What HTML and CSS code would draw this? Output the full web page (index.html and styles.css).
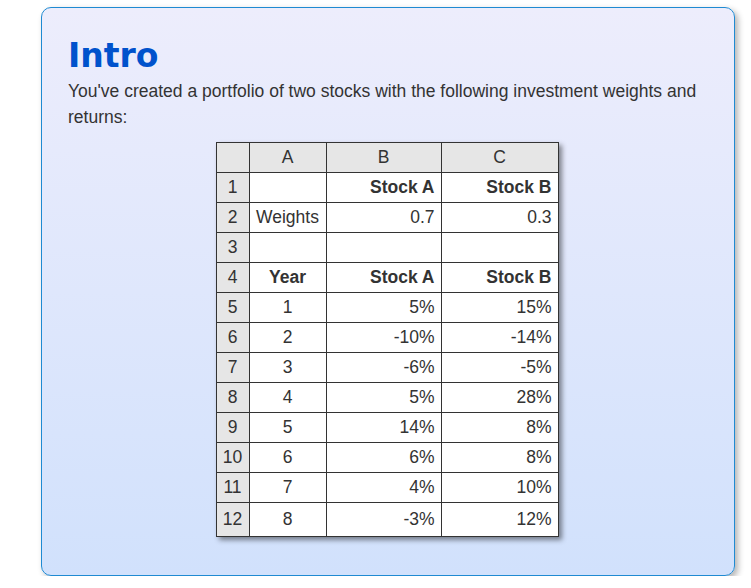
FILE: index.html
```html
<!DOCTYPE html>
<html>
<head>
<meta charset="utf-8">
<link rel="stylesheet" href="styles.css">
</head>
<body>
<div class="card">
  <h1 class="title">Intro</h1>
  <p class="lead">You've created a portfolio of two stocks with the following investment weights and returns:</p>
  <table class="sheet">
    <colgroup>
      <col class="c-n"><col class="c-a"><col class="c-b"><col class="c-c">
    </colgroup>
    <tr class="hdr"><th></th><th>A</th><th>B</th><th>C</th></tr>
    <tr><td class="n">1</td><td class="a"></td><td class="r b">Stock A</td><td class="r b">Stock B</td></tr>
    <tr><td class="n">2</td><td class="a">Weights</td><td class="r">0.7</td><td class="r">0.3</td></tr>
    <tr><td class="n">3</td><td class="a"></td><td class="r"></td><td class="r"></td></tr>
    <tr><td class="n">4</td><td class="a b">Year</td><td class="r b">Stock A</td><td class="r b">Stock B</td></tr>
    <tr><td class="n">5</td><td class="a">1</td><td class="r">5%</td><td class="r">15%</td></tr>
    <tr><td class="n">6</td><td class="a">2</td><td class="r">-10%</td><td class="r">-14%</td></tr>
    <tr><td class="n">7</td><td class="a">3</td><td class="r">-6%</td><td class="r">-5%</td></tr>
    <tr><td class="n">8</td><td class="a">4</td><td class="r">5%</td><td class="r">28%</td></tr>
    <tr><td class="n">9</td><td class="a">5</td><td class="r">14%</td><td class="r">8%</td></tr>
    <tr><td class="n">10</td><td class="a">6</td><td class="r">6%</td><td class="r">8%</td></tr>
    <tr><td class="n">11</td><td class="a">7</td><td class="r">4%</td><td class="r">10%</td></tr>
    <tr class="last"><td class="n">12</td><td class="a">8</td><td class="r">-3%</td><td class="r">12%</td></tr>
  </table>
</div>
</body>
</html>
```
FILE: styles.css
```css
html, body {
  margin: 0;
  padding: 0;
  background: #ffffff;
}
body {
  font-family: "Liberation Sans", Arial, sans-serif;
  color: #333333;
}
.card {
  box-sizing: border-box;
  margin: 7px 0 0 41px;
  width: 694px;
  height: 569px;
  padding: 28px 28px 0 26px;
  border: 1px solid #1f8ad2;
  border-radius: 10px;
  background: linear-gradient(to bottom, #ededfc 0%, #d1e1fc 100%);
  box-shadow: 3px 3px 6px rgba(0, 0, 0, 0.3);
}
.title {
  margin: 0;
  font-family: "DejaVu Sans", Verdana, sans-serif;
  font-weight: bold;
  font-size: 33px;
  line-height: 40px;
  color: #0052cc;
}
.lead {
  margin: 2px 0 0 0;
  font-size: 17.5px;
  line-height: 26px;
  color: #333333;
}
.sheet {
  margin: 12px auto 0 auto;
  border-collapse: collapse;
  background: #ffffff;
  box-shadow: 3px 3px 5px rgba(0, 0, 0, 0.45);
  font-size: 17.5px;
  color: #333333;
}
.c-n { width: 33px; }
.c-a { width: 77px; }
.c-b { width: 115px; }
.c-c { width: 117px; }
.sheet th, .sheet td {
  border: 1px solid #333333;
  height: 29px;
  padding: 0 6px;
  box-sizing: border-box;
}
.sheet tr { height: 30px; }
.sheet tr.last { height: 34px; }
.sheet th {
  background: #e6e6e6;
  font-weight: normal;
  text-align: center;
}
.sheet td.n {
  background: #e6e6e6;
  text-align: center;
  padding: 0;
}
.sheet td.a { text-align: center; }
.sheet td.r { text-align: right; }
.sheet td.b { font-weight: bold; }
```
